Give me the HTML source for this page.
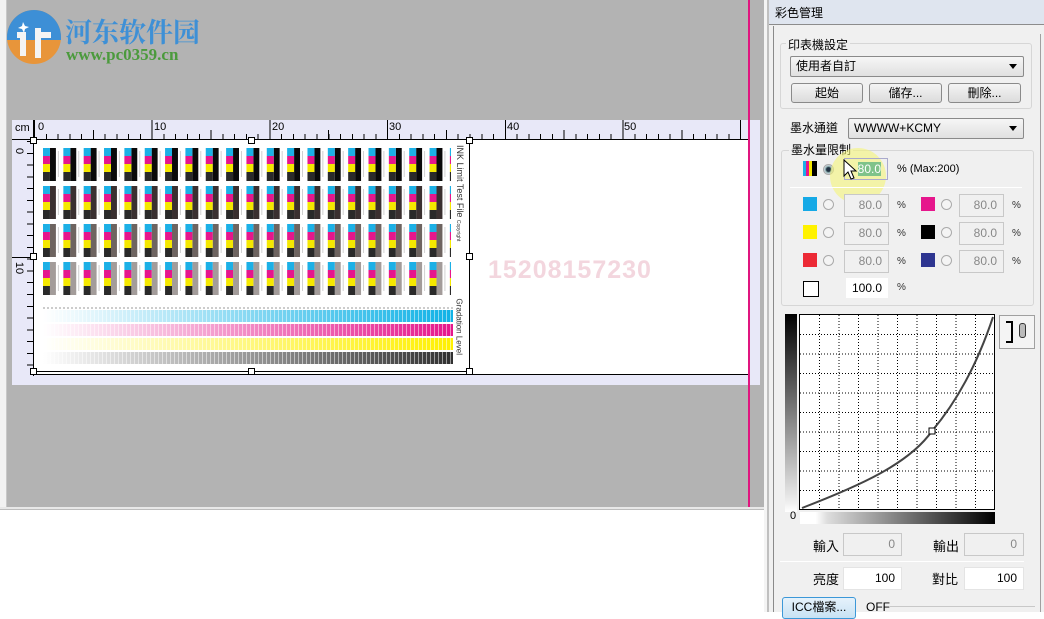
<!DOCTYPE html>
<html><head><meta charset="utf-8"><style>
*{margin:0;padding:0;box-sizing:border-box}
body{width:1044px;height:612px;overflow:hidden;background:#fff;position:relative;font-family:"Liberation Sans","Noto Sans CJK TC",sans-serif;font-size:12px;color:#000}
.a{position:absolute}
.inp{position:absolute;background:#f0f0f0;border:1px solid #c8c8c8;text-align:right;padding-right:6px;color:#888;font-size:12px;line-height:20px}
.inp.w{background:#fff;color:#000}
.btn{position:absolute;border:1px solid #8a8a8a;border-radius:3px;background:linear-gradient(#f4f4f4,#dcdcdc);text-align:center;line-height:18px;font-size:12px}
.dd{position:absolute;border:1px solid #8a8a8a;border-radius:2px;background:linear-gradient(#f6f6f6,#e0e0e0);padding-left:5px;line-height:18px;font-size:12px}
.dd:after{content:"";position:absolute;right:6px;top:7px;border-left:4px solid transparent;border-right:4px solid transparent;border-top:5px solid #000}
.rad{position:absolute;width:11px;height:11px;border-radius:50%;border:1px solid #aaa;background:#f4f4f4}
.sw{position:absolute;width:14px;height:14px}
.row{position:absolute;left:43px;width:408px;height:33px;background-repeat:repeat-x;background-size:20.35px 8px,20.35px 8px,20.35px 8px,20.35px 9px,20.35px 33px,20.35px 26px;background-position:0 0,0 8px,0 16px,0 24px,0 0,0 3px}
.grad{position:absolute;left:43px;width:410px;height:12px}
</style></head><body>
<div class="a" style="left:0;top:0;width:7px;height:507px;background:#f2f2f2;border-right:1px solid #c8c8c8"></div>
<div class="a" style="left:7px;top:0;width:757px;height:507px;background:#b3b3b3"></div>
<div class="a" style="left:0;top:507px;width:766px;height:3px;background:#e8e8e8;border-bottom:1px solid #bdbdbd"></div>
<div class="a" style="left:764px;top:0;width:3px;height:612px;background:#f4f4f4"></div>
<div class="a" style="left:767px;top:0;width:2px;height:612px;background:#c0c0c0"></div>

<svg class="a" style="left:5px;top:8px" width="58" height="58" viewBox="0 0 58 58">
<circle cx="29" cy="29" r="27" fill="#e8953a"/>
<path d="M2 29 A27 27 0 0 1 56 29 L56 32 L2 32Z" fill="#3d8fd6"/>
<path d="M12 24 h9 v24 h-6 v-18 h-3z M30 20 h6 v30 h-6z M36 24 h10 v6 h-10z" fill="#f4f4f4"/>
<path d="M18 14 l2 4 4 1-4 2-1 4-2-4-4-1 4-2z" fill="#fff"/>
</svg>
<div class="a" style="left:65px;top:11px;font:bold 27px 'Noto Serif CJK SC','Noto Sans CJK SC',serif;color:#3e90d6">河东软件园</div>
<div class="a" style="left:66px;top:45px;font:bold 17px 'Liberation Serif',serif;color:#4b9a3c">www.pc0359.cn</div>

<div class="a" style="left:12px;top:120px;width:748px;height:265px;background:#e8e8f8"></div>
<div class="a" style="left:12px;top:139px;width:738px;height:1px;background:#000"></div>
<div class="a" style="left:33px;top:120px;width:1px;height:256px;background:#000"></div>
<div class="a" style="left:34px;top:134px;width:716px;height:5px;background:repeating-linear-gradient(to right,#000 0 1px,transparent 1px 11.77px)"></div>
<div class="a" style="left:34px;top:130px;width:716px;height:9px;background:repeating-linear-gradient(to right,#000 0 1px,transparent 1px 58.85px)"></div>
<div class="a" style="left:34px;top:120px;width:716px;height:19px;background:repeating-linear-gradient(to right,#000 0 1px,transparent 1px 117.7px)"></div>
<div class="a" style="left:15px;top:122px;font-size:11px">cm</div>
<div class="a" style="left:38px;top:121px;font-size:11px">0</div>
<div class="a" style="left:154px;top:121px;font-size:11px">10</div>
<div class="a" style="left:272px;top:121px;font-size:11px">20</div>
<div class="a" style="left:389px;top:121px;font-size:11px">30</div>
<div class="a" style="left:507px;top:121px;font-size:11px">40</div>
<div class="a" style="left:624px;top:121px;font-size:11px">50</div>
<div class="a" style="left:27px;top:141px;width:6px;height:234px;background:repeating-linear-gradient(to bottom,#000 0 1px,transparent 1px 11.77px)"></div>
<div class="a" style="left:12px;top:257px;width:21px;height:1px;background:#000"></div>
<div class="a" style="left:16px;top:145px;font-size:11px;transform:rotate(90deg)">0</div>
<div class="a" style="left:13px;top:262px;font-size:11px;transform:rotate(90deg)">10</div>

<div class="a" style="left:34px;top:140px;width:714px;height:235px;background:#fff;border-bottom:1px solid #000"></div>
<div class="a" style="left:469px;top:140px;width:1px;height:232px;background:#000"></div>
<div class="a" style="left:33px;top:371px;width:437px;height:1px;background:#000"></div>

<div class="row" style="top:148px;background-image:linear-gradient(to right,#1cb0e6 0 7px,transparent 7px),linear-gradient(to right,#e6168c 0 7px,transparent 7px),linear-gradient(to right,#f5e800 0 7px,transparent 7px),linear-gradient(to right,#2a2a2a 0 7px,transparent 7px),linear-gradient(to right,transparent 7px,#0a0a0a 7px 13px,transparent 13px),linear-gradient(to right,transparent 15px,#d0d0d0 15px 16px,transparent 16px)"></div>
<div class="row" style="top:186px;background-image:linear-gradient(to right,#1cb0e6 0 7px,transparent 7px),linear-gradient(to right,#e6168c 0 7px,transparent 7px),linear-gradient(to right,#f5e800 0 7px,transparent 7px),linear-gradient(to right,#2a2a2a 0 7px,transparent 7px),linear-gradient(to right,transparent 7px,#3a3030 7px 13px,transparent 13px),linear-gradient(to right,transparent 15px,#d0d0d0 15px 16px,transparent 16px)"></div>
<div class="row" style="top:224px;background-image:linear-gradient(to right,#1cb0e6 0 7px,transparent 7px),linear-gradient(to right,#e6168c 0 7px,transparent 7px),linear-gradient(to right,#f5e800 0 7px,transparent 7px),linear-gradient(to right,#2a2a2a 0 7px,transparent 7px),linear-gradient(to right,transparent 7px,#6e6460 7px 13px,transparent 13px),linear-gradient(to right,transparent 15px,#d0d0d0 15px 16px,transparent 16px)"></div>
<div class="row" style="top:262px;background-image:linear-gradient(to right,#1cb0e6 0 7px,transparent 7px),linear-gradient(to right,#e6168c 0 7px,transparent 7px),linear-gradient(to right,#f5e800 0 7px,transparent 7px),linear-gradient(to right,#2a2a2a 0 7px,transparent 7px),linear-gradient(to right,transparent 7px,#a39c9a 7px 13px,transparent 13px),linear-gradient(to right,transparent 15px,#d0d0d0 15px 16px,transparent 16px)"></div>

<div class="a" style="left:43px;top:307px;width:410px;height:2px;background:repeating-linear-gradient(to right,#ccc 0 2px,transparent 2px 4px)"></div>
<div class="grad" style="top:310px;background:repeating-linear-gradient(to right,transparent 0 3px,rgba(255,255,255,.5) 3px 4px),linear-gradient(to right,#fff,#10b2e6)"></div>
<div class="grad" style="top:324px;background:repeating-linear-gradient(to right,transparent 0 3px,rgba(255,255,255,.5) 3px 4px),linear-gradient(to right,#fff,#e6178c)"></div>
<div class="grad" style="top:338px;background:repeating-linear-gradient(to right,transparent 0 3px,rgba(255,255,255,.5) 3px 4px),linear-gradient(to right,#fff,#fff000)"></div>
<div class="grad" style="top:352px;background:repeating-linear-gradient(to right,transparent 0 3px,rgba(255,255,255,.5) 3px 4px),linear-gradient(to right,#fff,#303030)"></div>
<div class="a" style="left:405px;top:195px;width:110px;height:10px;font-size:9px;line-height:10px;color:#333;transform:rotate(90deg);white-space:nowrap">INK Limit Test File <span style="font-size:5px">Copyright</span></div>
<div class="a" style="left:421px;top:331px;width:75px;height:10px;font-size:8px;line-height:10px;color:#333;transform:rotate(90deg);white-space:nowrap">Gradation Level</div>
<div class="a" style="left:488px;top:256px;font:bold 25px 'Liberation Sans',sans-serif;color:#f3d6de;letter-spacing:1px">15208157230</div>
<div class="a" style="left:30px;top:137px;width:7px;height:7px;border:1px solid #000;background:#fff"></div>
<div class="a" style="left:248px;top:137px;width:7px;height:7px;border:1px solid #000;background:#fff"></div>
<div class="a" style="left:466px;top:137px;width:7px;height:7px;border:1px solid #000;background:#fff"></div>
<div class="a" style="left:30px;top:253px;width:7px;height:7px;border:1px solid #000;background:#fff"></div>
<div class="a" style="left:466px;top:253px;width:7px;height:7px;border:1px solid #000;background:#fff"></div>
<div class="a" style="left:30px;top:368px;width:7px;height:7px;border:1px solid #000;background:#fff"></div>
<div class="a" style="left:248px;top:368px;width:7px;height:7px;border:1px solid #000;background:#fff"></div>
<div class="a" style="left:466px;top:368px;width:7px;height:7px;border:1px solid #000;background:#fff"></div>
<div class="a" style="left:748px;top:0;width:2px;height:507px;background:#e0157f"></div>

<div class="a" style="left:769px;top:0;width:275px;height:612px;background:#f0f0f0"></div>
<div class="a" style="left:769px;top:0;width:275px;height:25px;background:#dfe5ef;border-bottom:1px solid #8c8c8c"></div>
<div class="a" style="left:775px;top:4px;font-size:12px">彩色管理</div>
<div class="a" style="left:773px;top:26px;width:1px;height:586px;background:#8a8a8a"></div>
<div class="a" style="left:1040px;top:34px;width:1px;height:578px;background:#a0a0a0"></div>

<div class="a" style="left:780px;top:43px;width:252px;height:66px;border:1px solid #d6d6d6;border-radius:3px"></div>
<div class="a" style="left:786px;top:36px;padding:0 2px;background:#f0f0f0;font-size:12px">印表機設定</div>
<div class="dd" style="left:790px;top:56px;width:234px;height:21px">使用者自訂</div>
<div class="btn" style="left:791px;top:83px;width:72px;height:20px">起始</div>
<div class="btn" style="left:869px;top:83px;width:73px;height:20px">儲存...</div>
<div class="btn" style="left:948px;top:83px;width:73px;height:20px">刪除...</div>

<div class="a" style="left:790px;top:119px;font-size:12px">墨水通道</div>
<div class="dd" style="left:848px;top:118px;width:176px;height:21px">WWWW+KCMY</div>
<div class="a" style="left:781px;top:150px;width:253px;height:156px;border:1px solid #d6d6d6;border-radius:3px"></div>
<div class="a" style="left:789px;top:141px;padding:0 2px;background:#f0f0f0;font-size:12px">墨水量限制</div>

<div class="a" style="left:803px;top:161px;width:14px;height:15px;background:linear-gradient(to right,#1cb0e6 0 3px,#e6168c 3px 6px,#f5e800 6px 9px,#000 9px)"></div>
<div class="rad" style="left:823px;top:164px;background:radial-gradient(#234 0 2px,#8aa 3px,#eef 5px)"></div>
<div class="a" style="left:830px;top:148px;width:56px;height:56px;border-radius:50%;background:rgba(245,245,120,.6)"></div>
<div class="inp w" style="left:844px;top:158px;width:44px;height:22px;background:transparent;border-color:#aac"><span style="background:#7fc38a;color:#fff">80.0</span></div>
<svg class="a" style="left:843px;top:159px" width="16" height="22"><path d="M1 1 L1 17 L5 13 L8 20 L11 19 L8 12 L13 12 Z" fill="#fff" stroke="#000"/></svg>
<div class="a" style="left:897px;top:163px;font-size:11px">% (Max:200)</div>
<div class="a" style="left:790px;top:187px;width:232px;height:1px;background:#c8c8c8;border-bottom:1px solid #fff"></div>

<div class="sw" style="left:803px;top:197px;background:#15a9e6"></div>
<div class="rad" style="left:823px;top:199px"></div>
<div class="inp" style="left:844px;top:194px;width:45px;height:23px">80.0</div>
<div class="a" style="left:897px;top:200px;font-size:10px;color:#333">%</div>
<div class="sw" style="left:921px;top:197px;background:#e6168c"></div>
<div class="rad" style="left:941px;top:199px"></div>
<div class="inp" style="left:959px;top:194px;width:45px;height:23px">80.0</div>
<div class="a" style="left:1012px;top:200px;font-size:10px;color:#333">%</div>

<div class="sw" style="left:803px;top:225px;background:#fff200"></div>
<div class="rad" style="left:823px;top:227px"></div>
<div class="inp" style="left:844px;top:222px;width:45px;height:23px">80.0</div>
<div class="a" style="left:897px;top:228px;font-size:10px;color:#333">%</div>
<div class="sw" style="left:921px;top:225px;background:#000"></div>
<div class="rad" style="left:941px;top:227px"></div>
<div class="inp" style="left:959px;top:222px;width:45px;height:23px">80.0</div>
<div class="a" style="left:1012px;top:228px;font-size:10px;color:#333">%</div>

<div class="sw" style="left:803px;top:253px;background:#ec2a35"></div>
<div class="rad" style="left:823px;top:255px"></div>
<div class="inp" style="left:844px;top:250px;width:45px;height:23px">80.0</div>
<div class="a" style="left:897px;top:256px;font-size:10px;color:#333">%</div>
<div class="sw" style="left:921px;top:253px;background:#2e3590"></div>
<div class="rad" style="left:941px;top:255px"></div>
<div class="inp" style="left:959px;top:250px;width:45px;height:23px">80.0</div>
<div class="a" style="left:1012px;top:256px;font-size:10px;color:#333">%</div>

<div class="sw" style="left:803px;top:281px;width:16px;height:16px;border:1px solid #000;background:#fff"></div>
<div class="inp w" style="left:845px;top:277px;width:44px;height:22px;border-color:#f0f0f0">100.0</div>
<div class="a" style="left:897px;top:282px;font-size:10px;color:#333">%</div>

<div class="a" style="left:785px;top:314px;width:12px;height:198px;background:linear-gradient(#000,#eee 95%,#fff)"></div>
<svg class="a" style="left:799px;top:314px" width="197" height="197">
<rect x="0.5" y="0.5" width="195" height="195" fill="#fff" stroke="#000"/>
<g stroke="#000" stroke-dasharray="1 2" stroke-width="1">
<path d="M20.5 1V195M40 1V195M59.5 1V195M79 1V195M98.5 1V195M118 1V195M137.5 1V195M157 1V195M176.5 1V195"/>
<path d="M1 20.5H195M1 40H195M1 59.5H195M1 79H195M1 98.5H195M1 118H195M1 137.5H195M1 157H195M1 176.5H195"/>
</g>
<path d="M3 194 C60 172 110 150 133 117 C160 85 180 45 194 3" fill="none" stroke="#444" stroke-width="2"/>
<rect x="130" y="114" width="6" height="6" fill="#fff" stroke="#000"/>
</svg>
<div class="a" style="left:999px;top:315px;width:36px;height:34px;border:1px solid #a0a0a0;background:#f4f4f4"></div>
<div class="a" style="left:1006px;top:321px;width:7px;height:22px;border:2px solid #000;border-left:none"></div>
<div class="a" style="left:1019px;top:323px;width:7px;height:15px;border:1px solid #333;border-radius:3px;background:#bbb"></div>
<div class="a" style="left:790px;top:510px;font-size:11px">0</div>
<div class="a" style="left:800px;top:512px;width:195px;height:12px;background:linear-gradient(to right,#fff 0 8%,#ddd 14%,#000)"></div>

<div class="a" style="left:813px;top:536px;font-size:13px">輸入</div>
<div class="inp" style="left:843px;top:533px;width:59px;height:23px">0</div>
<div class="a" style="left:933px;top:536px;font-size:13px">輸出</div>
<div class="inp" style="left:964px;top:533px;width:60px;height:23px">0</div>
<div class="a" style="left:780px;top:561px;width:244px;height:1px;background:#c8c8c8;border-bottom:1px solid #fff"></div>
<div class="a" style="left:813px;top:569px;font-size:13px">亮度</div>
<div class="inp w" style="left:843px;top:567px;width:59px;height:23px;border-color:#e4e4e4">100</div>
<div class="a" style="left:932px;top:569px;font-size:13px">對比</div>
<div class="inp w" style="left:964px;top:567px;width:60px;height:23px;border-color:#e4e4e4">100</div>
<div class="btn" style="left:782px;top:597px;width:74px;height:22px;border-color:#3c98d8;background:linear-gradient(#e6f2fb,#c8e2f4)">ICC檔案...</div>
<div class="a" style="left:866px;top:600px;font-size:12px">OFF</div>
<div class="a" style="left:890px;top:606px;width:145px;height:1px;background:#c8c8c8"></div>
</body></html>
